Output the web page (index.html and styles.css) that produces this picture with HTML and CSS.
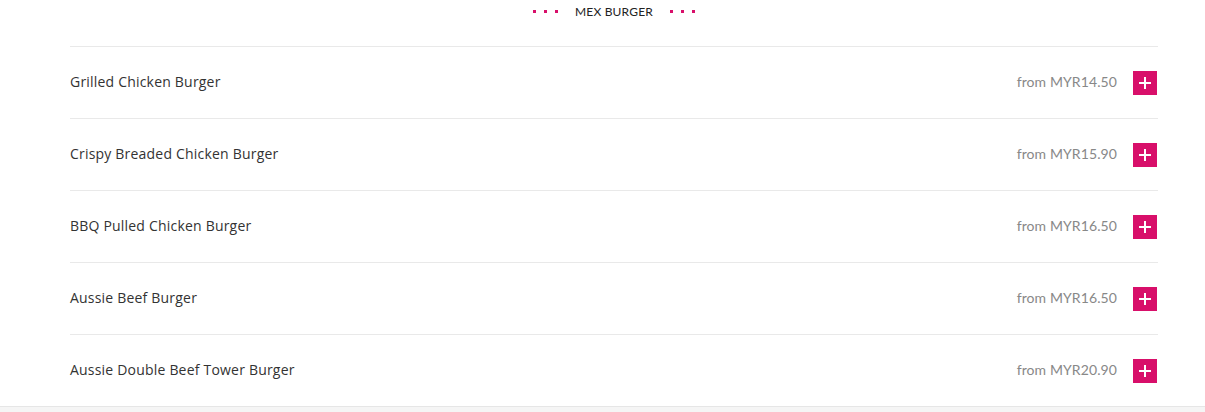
FILE: index.html
```html
<!DOCTYPE html>
<html lang="en">
<head>
    <meta charset="UTF-8">
    <title>Mex Burger</title>
    <link rel="stylesheet" href="styles.css">
</head>
<body>
<div class="menu">
    <div class="category-title">
        <span class="dots"><i></i><i></i><i></i></span>
        <h2>Mex Burger</h2>
        <span class="dots"><i></i><i></i><i></i></span>
    </div>

    <ul class="item-list">
        <li class="item">
            <span class="item-name">Grilled Chicken Burger</span>
            <span class="item-price">from MYR14.50</span>
            <button class="add-btn" aria-label="Add"></button>
        </li>
        <li class="item">
            <span class="item-name">Crispy Breaded Chicken Burger</span>
            <span class="item-price">from MYR15.90</span>
            <button class="add-btn" aria-label="Add"></button>
        </li>
        <li class="item">
            <span class="item-name">BBQ Pulled Chicken Burger</span>
            <span class="item-price">from MYR16.50</span>
            <button class="add-btn" aria-label="Add"></button>
        </li>
        <li class="item">
            <span class="item-name">Aussie Beef Burger</span>
            <span class="item-price">from MYR16.50</span>
            <button class="add-btn" aria-label="Add"></button>
        </li>
        <li class="item">
            <span class="item-name">Aussie Double Beef Tower Burger</span>
            <span class="item-price">from MYR20.90</span>
            <button class="add-btn" aria-label="Add"></button>
        </li>
    </ul>
</div>
<div class="footer-band"></div>
</body>
</html>
```

FILE: styles.css
```css
body {
    margin: 0;
    font-family: Lato, "Open Sans", sans-serif;
    color: #333;
    background-color: #fff;
}

.menu {
    width: 1088px;
    margin-left: 70px;
}

.category-title {
    display: flex;
    justify-content: center;
    align-items: center;
    gap: 17px;
    height: 22px;
    padding-bottom: 24px;
}

.category-title h2 {
    margin: 0;
    font-size: 12px;
    font-weight: 400;
    text-transform: uppercase;
    color: #222;
    letter-spacing: 0.2px;
}

.dots {
    display: flex;
    gap: 8px;
}

.dots i {
    display: block;
    width: 3px;
    height: 3px;
    background-color: #d80f6a;
}

.item-list {
    list-style: none;
    margin: 0;
    padding: 0;
}

.item {
    display: flex;
    align-items: center;
    height: 71px;
    border-top: 1px solid #e9e9e9;
    font-size: 14px;
}

.item-name {
    flex: 1;
    font-family: "Open Sans", sans-serif;
    letter-spacing: 0.2px;
    color: #333;
    margin-top: -2px;
}

.item-price {
    color: #888;
    letter-spacing: 0.1px;
    margin-right: 16px;
    margin-top: -2px;
}

.add-btn {
    position: relative;
    width: 24px;
    height: 24px;
    padding: 0;
    margin-right: 1px;
    border: none;
    background-color: #d80f6a;
    cursor: pointer;
}

.add-btn::before,
.add-btn::after {
    content: "";
    position: absolute;
    left: 50%;
    top: 50%;
    background-color: #fff;
}

.add-btn::before {
    width: 12px;
    height: 2px;
    margin: -1px 0 0 -6px;
}

.add-btn::after {
    width: 2px;
    height: 12px;
    margin: -6px 0 0 -1px;
}

.footer-band {
    height: 10px;
    border-top: 1px solid #e6e6e6;
    background-color: #f5f5f5;
}
```
